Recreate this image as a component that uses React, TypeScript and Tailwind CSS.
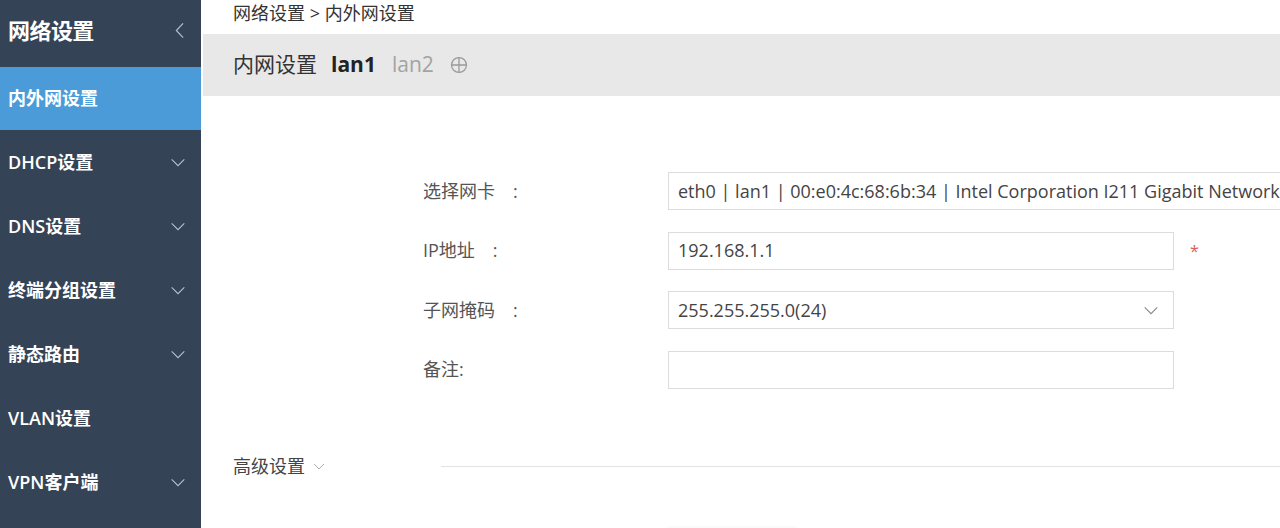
import React from "react";

const font = { fontFamily: '"Open Sans", "Noto Sans CJK SC", sans-serif' };

function ChevronDown({ className = "" }: { className?: string }) {
  return (
    <svg viewBox="0 0 16 10" className={className} fill="none" stroke="currentColor" strokeWidth="1.2">
      <path d="M1 1.5 L8 8.5 L15 1.5" />
    </svg>
  );
}

const menu = [
  { label: "DHCP设置", sub: true },
  { label: "DNS设置", sub: true },
  { label: "终端分组设置", sub: true },
  { label: "静态路由", sub: true },
  { label: "VLAN设置", sub: false },
  { label: "VPN客户端", sub: true },
];

const rows = [
  { label: "选择网卡", colon: true, value: "eth0 | lan1 | 00:e0:4c:68:6b:34 | Intel Corporation I211 Gigabit Network Connection", wide: true },
  { label: "IP地址", colon: true, value: "192.168.1.1", required: true },
  { label: "子网掩码", colon: true, value: "255.255.255.0(24)", select: true },
  { label: "备注:", colon: false, value: "" },
];

export default function App() {
  return (
    <div className="flex h-[528px] w-[1280px] overflow-hidden bg-white" style={font}>
      <aside className="flex w-[201px] shrink-0 flex-col bg-[#354356] text-white">
        <div className="flex h-[67px] shrink-0 items-center justify-between pb-[6px] pl-2 pr-[17px]">
          <span className="text-[22px] font-semibold tracking-tight">网络设置</span>
          <svg viewBox="0 0 10 18" className="h-[17px] w-[9px] text-[#b7c0cc]" fill="none" stroke="currentColor" strokeWidth="1.3">
            <path d="M9 1 L1.5 9 L9 17" />
          </svg>
        </div>
        <div className="flex h-[63px] shrink-0 items-center bg-[#4a9bd8] pl-2 text-[18px] font-semibold">内外网设置</div>
        {menu.map((m) => (
          <div key={m.label} className="flex h-[64px] shrink-0 items-center justify-between pl-2 pr-[15px] text-[18px] font-semibold">
            <span>{m.label}</span>
            {m.sub && <ChevronDown className="h-[9px] w-[16px] text-[#b7c0cc]" />}
          </div>
        ))}
      </aside>

      <main className="flex min-w-0 flex-1 flex-col">
        <div className="flex h-[34px] shrink-0 items-center pb-[7px] pl-[32px] text-[18px] text-[#333]">网络设置 &gt; 内外网设置</div>
        <div className="ml-[2px] flex h-[62px] shrink-0 items-center gap-[14px] bg-[#e8e8e8] pl-[30px]">
          <span className="text-[21px] text-[#333]">内网设置</span>
          <span className="text-[21px] font-bold text-[#222]">lan1</span>
          <span className="ml-[2px] text-[21px] text-[#a3a3a3]">lan2</span>
          <svg viewBox="0 0 20 20" className="ml-[2px] h-[18px] w-[18px] text-[#999]" fill="none" stroke="currentColor" strokeWidth="1.4">
            <circle cx="10" cy="10" r="8.3" />
            <path d="M10 1.7 V18.3 M1.7 10 H18.3" />
          </svg>
        </div>

        <div className="mt-[76px] flex shrink-0 flex-col gap-[21.5px] pl-[222px]">
          {rows.map((r) => (
            <div key={r.label} className="flex items-center">
              <label className="w-[245px] shrink-0 text-[18px] text-[#555]">
                {r.label}
                {r.colon && <span className="ml-[18px]">:</span>}
              </label>
              <div
                className={`flex h-[38px] shrink-0 items-center overflow-hidden whitespace-nowrap border border-[#dcdcdc] pl-[9px] pr-[14px] text-[18px] text-[#444] ${
                  r.wide ? "w-[640px]" : "w-[506px]"
                }`}
              >
                <span className="flex-1">{r.value}</span>
                {r.select && <ChevronDown className="h-[9px] w-[16px] text-[#888]" />}
              </div>
              {r.required && <span className="ml-[16px] text-[16px] text-[#e05a5a]">*</span>}
            </div>
          ))}
        </div>

        <div className="mt-[64px] flex shrink-0 items-center pl-[32px]">
          <span className="flex items-center gap-[8px] text-[18px] text-[#444]">
            高级设置
            <ChevronDown className="h-[7px] w-[12px] text-[#999]" />
          </span>
          <div className="ml-[116px] h-px flex-1 bg-[#e3e3e3]" />
        </div>
        <div className="ml-[467px] mt-[46px] h-[8px] w-[128px] shrink-0 bg-[#fafafa]" />
      </main>
    </div>
  );
}
